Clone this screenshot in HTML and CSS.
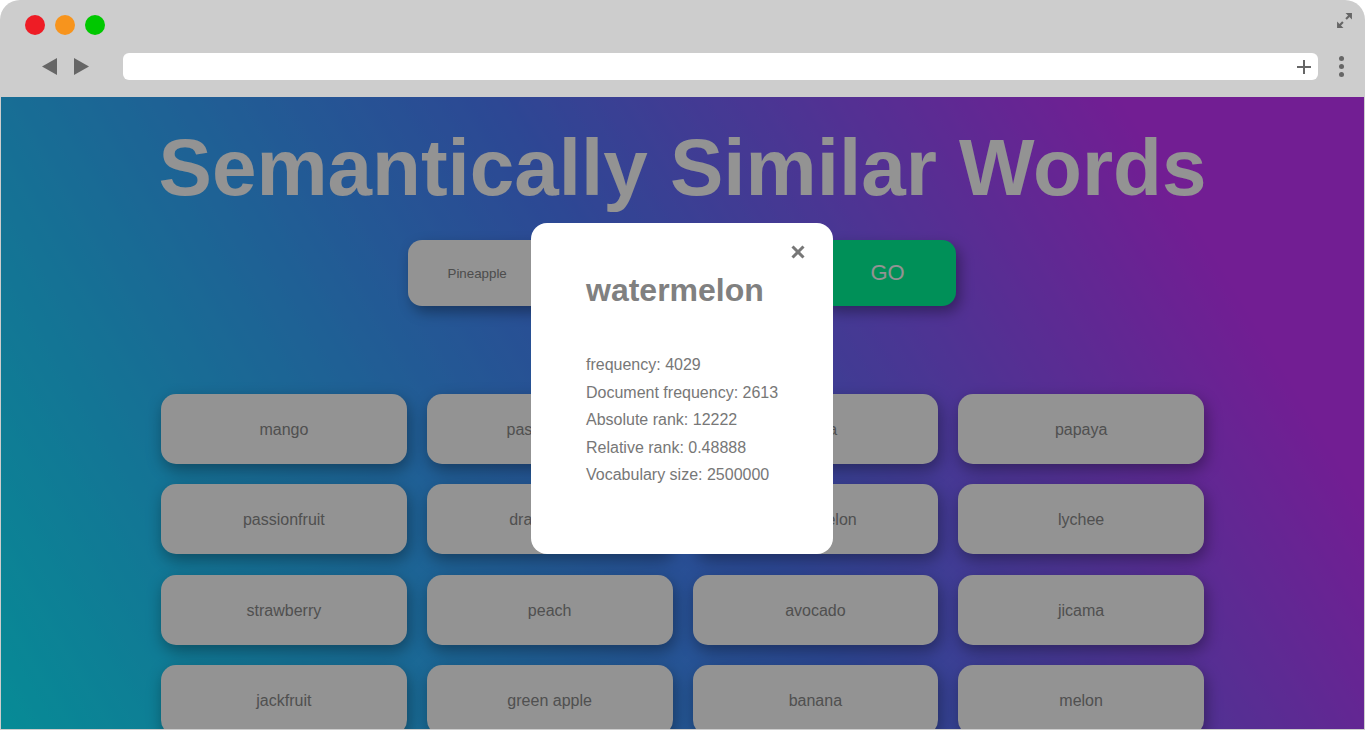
FILE: index.html
```html
<!DOCTYPE html>
<html lang="en">
<head>
<meta charset="utf-8">
<title>Semantically Similar Words</title>
<link rel="stylesheet" href="styles.css">
</head>
<body>
<div class="window">
  <div class="chrome">
    <div class="titlebar">
      <div class="lights">
        <span class="light red"></span>
        <span class="light orange"></span>
        <span class="light green"></span>
      </div>
      <svg class="expand" width="17" height="17" viewBox="0 0 16 16">
        <polygon points="9,1 15,1 15,7" fill="#666"/>
        <line x1="12.5" y1="3.5" x2="9.5" y2="6.5" stroke="#666" stroke-width="2"/>
        <polygon points="1,9 1,15 7,15" fill="#666"/>
        <line x1="3.5" y1="12.5" x2="6.5" y2="9.5" stroke="#666" stroke-width="2"/>
      </svg>
    </div>
    <div class="toolbar">
      <div class="nav">
        <svg width="15" height="17" viewBox="0 0 15 17"><polygon points="15,0 15,17 0,8.5" fill="#666"/></svg>
        <svg width="15" height="17" viewBox="0 0 15 17"><polygon points="0,0 0,17 15,8.5" fill="#666"/></svg>
      </div>
      <div class="address">
        <svg width="14" height="14" viewBox="0 0 14 14"><path d="M7 0v14M0 7h14" stroke="#666" stroke-width="2"/></svg>
      </div>
      <div class="kebab"><span></span><span></span><span></span></div>
    </div>
  </div>
  <div class="viewport">
    <main class="page">
      <h1 class="title">Semantically Similar Words</h1>
      <div class="search">
        <div class="search-input">Pineapple</div>
        <button class="search-go">GO</button>
      </div>
      <div class="grid">
        <div class="card">mango</div>
        <div class="card">passion fruit</div>
        <div class="card">guava</div>
        <div class="card">papaya</div>
        <div class="card">passionfruit</div>
        <div class="card">dragon fruit</div>
        <div class="card">watermelon</div>
        <div class="card">lychee</div>
        <div class="card">strawberry</div>
        <div class="card">peach</div>
        <div class="card">avocado</div>
        <div class="card">jicama</div>
        <div class="card">jackfruit</div>
        <div class="card">green apple</div>
        <div class="card">banana</div>
        <div class="card">melon</div>
      </div>
    </main>
    <div class="backdrop"></div>
    <div class="modal">
      <svg class="close" width="14" height="14" viewBox="0 0 14 14"><path d="M1.5 1.5l11 11M12.5 1.5l-11 11" stroke="#777" stroke-width="3"/></svg>
      <h2 class="modal-title">watermelon</h2>
      <div class="stats">
        <div>frequency: 4029</div>
        <div>Document frequency: 2613</div>
        <div>Absolute rank: 12222</div>
        <div>Relative rank: 0.48888</div>
        <div>Vocabulary size: 2500000</div>
      </div>
    </div>
  </div>
</div>
</body>
</html>
```

FILE: styles.css
```css
* { box-sizing: border-box; }
html, body { margin: 0; padding: 0; background: #fff; }
body { font-family: "Liberation Sans", Arial, sans-serif; }

.window {
  width: 1365px;
  height: 730px;
  background: #cdcdcd;
  border-radius: 20px 20px 0 0;
  overflow: hidden;
  display: flex;
  flex-direction: column;
}

.chrome { height: 97px; display: flex; flex-direction: column; }

.titlebar {
  height: 53px;
  display: flex;
  justify-content: space-between;
  align-items: flex-start;
  padding: 15px 12px 0 25px;
}
.lights { display: flex; gap: 10px; }
.light { width: 20px; height: 20px; border-radius: 50%; display: block; }
.red { background: #ee1c25; }
.orange { background: #f7941d; }
.green { background: #00c800; }
.expand { margin-top: -3px; }

.toolbar {
  height: 27px;
  display: flex;
  align-items: center;
  padding: 0 21px 0 42px;
}
.nav { display: flex; gap: 17px; margin-right: 34px; }
.nav svg { display: block; }
.address {
  flex: 1;
  height: 27px;
  background: #fff;
  border-radius: 6px;
  display: flex;
  align-items: center;
  justify-content: flex-end;
  padding-right: 7px;
}
.kebab { display: flex; flex-direction: column; gap: 3px; margin-left: 21px; }
.kebab span { width: 5px; height: 5px; border-radius: 50%; background: #666; display: block; }

.viewport {
  position: relative;
  margin: 0 1px 1px;
  height: 632px;
  overflow: hidden;
  background: linear-gradient(59deg, #0ce8fa 0%, #4b78f7 50%, #be32f5 86%, #be32f5 100%);
}

.page { padding-top: 25px; }
.title {
  margin: 0;
  font-size: 80px;
  line-height: 92px;
  font-weight: bold;
  color: #f5f5f5;
  text-align: center;
}

.search {
  margin-top: 26px;
  display: flex;
  justify-content: center;
  gap: 12px;
  padding-right: 2px;
}
.search-input {
  width: 400px;
  height: 66px;
  background: #f5f5f5;
  border-radius: 14px;
  padding-left: 40px;
  display: flex;
  align-items: center;
  font-size: 13.333px;
  color: #808080;
  box-shadow: 4px 6px 14px rgba(0,0,0,0.35);
}
.search-go {
  width: 136px;
  height: 66px;
  border: 0;
  background: #00f093;
  border-radius: 14px;
  color: #f5f5f5;
  font-family: "Liberation Sans", Arial, sans-serif;
  font-size: 22px;
  box-shadow: 4px 6px 14px rgba(0,0,0,0.35);
}

.grid {
  width: 1043px;
  margin: 88px auto 0;
  display: grid;
  grid-template-columns: repeat(4, 1fr);
  grid-auto-rows: 70px;
  column-gap: 20px;
  row-gap: 20.3px;
}
.card {
  background: #f5f5f5;
  border-radius: 15px;
  display: flex;
  align-items: center;
  justify-content: center;
  padding-top: 2px;
  font-size: 16px;
  color: #858585;
  box-shadow: 2px 6px 16px rgba(0,0,0,0.35);
}

.backdrop {
  position: absolute;
  inset: 0;
  background: rgba(0,0,0,0.4);
}

.modal {
  position: absolute;
  left: 530px;
  top: 126px;
  width: 302px;
  height: 331px;
  background: #fff;
  border-radius: 16px;
  padding: 49px 20px 0 55px;
}
.close { position: absolute; left: 260px; top: 22px; }
.modal-title {
  margin: 0;
  font-size: 32px;
  line-height: 37px;
  font-weight: bold;
  color: #808080;
}
.stats {
  margin-top: 42px;
  font-size: 16px;
  line-height: 27.5px;
  color: #777;
}
```
